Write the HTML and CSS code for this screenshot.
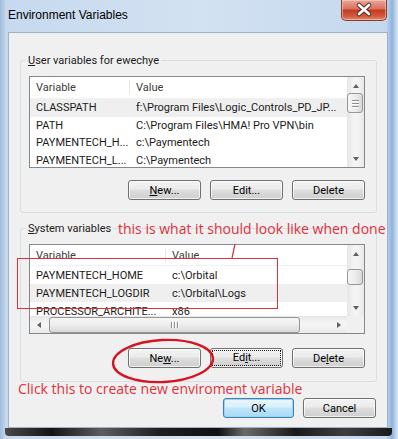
FILE: index.html
```html
<!DOCTYPE html>
<html lang="en">
<head>
    <meta charset="UTF-8">
    <title>Environment Variables</title>
    <link rel="stylesheet" href="styles.css">
</head>
<body>

<div class="window">
    <div class="titlebar">
        <span class="title">Environment Variables</span>
        <div class="close">
            <svg width="44" height="19" viewBox="0 0 44 19">
                <path d="M17 5 L27 14 M27 5 L17 14" stroke="#5a2a22" stroke-width="4.5" stroke-linecap="round"/>
                <path d="M17 5 L27 14 M27 5 L17 14" stroke="#ffffff" stroke-width="2.6" stroke-linecap="round"/>
            </svg>
        </div>
    </div>

    <div class="client">
        <!-- user variables -->
        <fieldset class="group">
            <legend><u>U</u>ser variables for ewechye</legend>
            <div class="listbox user-list">
                <div class="list-body">
                    <div class="list-head"><span class="c1">Variable</span><span class="c2">Value</span></div>
                    <div class="row selected"><span class="c1">CLASSPATH</span><span class="c2">f:\Program Files\Logic_Controls_PD_JP...</span></div>
                    <div class="row"><span class="c1">PATH</span><span class="c2">C:\Program Files\HMA! Pro VPN\bin</span></div>
                    <div class="row"><span class="c1">PAYMENTECH_H...</span><span class="c2">c:\Paymentech</span></div>
                    <div class="row"><span class="c1">PAYMENTECH_L...</span><span class="c2">C:\Paymentech</span></div>
                </div>
                <div class="vscroll">
                    <div class="arrow"><span class="tri up"></span></div>
                    <div class="track"><div class="thumb grip"><i></i><i></i><i></i></div></div>
                    <div class="arrow"><span class="tri down"></span></div>
                </div>
            </div>
            <div class="btn-row">
                <button class="btn"><u>N</u>ew...</button>
                <button class="btn">Edit...</button>
                <button class="btn">Delete</button>
            </div>
        </fieldset>

        <!-- system variables -->
        <fieldset class="group sys-group">
            <legend><u>S</u>ystem variables</legend>
            <div class="listbox sys-list">
                <div class="list-body">
                    <div class="list-head"><span class="c1">Variable</span><span class="c2">Value</span></div>
                    <div class="row"><span class="c1">PAYMENTECH_HOME</span><span class="c2">c:\Orbital</span></div>
                    <div class="row selected"><span class="c1">PAYMENTECH_LOGDIR</span><span class="c2">c:\Orbital\Logs</span></div>
                    <div class="row"><span class="c1">PROCESSOR_ARCHITE...</span><span class="c2">x86</span></div>
                </div>
                <div class="vscroll">
                    <div class="arrow"><span class="tri up"></span></div>
                    <div class="track"><div class="thumb small"></div></div>
                    <div class="arrow"><span class="tri down"></span></div>
                </div>
                <div class="hscroll">
                    <div class="arrow"><span class="tri left"></span></div>
                    <div class="track"><div class="thumb hgrip"><i></i><i></i><i></i></div></div>
                    <div class="arrow"><span class="tri right"></span></div>
                </div>
                <div class="corner"></div>
            </div>
            <div class="btn-row low">
                <button class="btn">Ne<u>w</u>...</button>
                <button class="btn focused"><span>Ed<u>i</u>t...</span></button>
                <button class="btn">De<u>l</u>ete</button>
            </div>
        </fieldset>

        <div class="dialog-btns">
            <button class="btn default ok">OK</button>
            <button class="btn">Cancel</button>
        </div>
    </div>

    <div class="frame-bottom"></div>

    <!-- annotations drawn on top of the screenshot -->
    <span class="note note-top">this is what it should look like when done</span>
    <span class="note note-bottom">Click this to create new enviroment variable</span>
    <svg class="marks" width="398" height="439" viewBox="0 0 398 439">
        <rect x="17.5" y="258.5" width="260" height="50" fill="none" stroke="#d8323e" stroke-width="1"/>
        <path d="M235 244 L232 258" stroke="#d8323e" stroke-width="1.2" fill="none"/>
        <ellipse cx="163" cy="361" rx="50" ry="21" fill="none" stroke="#d4141e" stroke-width="2.4" transform="rotate(-3 163 361)"/>
    </svg>
</div>

</body>
</html>
```

FILE: styles.css
```css
* {
    box-sizing: border-box;
}

body {
    margin: 0;
    font-family: Roboto, "Liberation Sans", Arial, sans-serif;
    font-size: 11px;
    color: #1b1b1b;
}

.window {
    position: relative;
    width: 398px;
    height: 439px;
    padding: 0 10px 0 8px;
    display: flex;
    flex-direction: column;
    overflow: hidden;
    background: linear-gradient(to right, #9fbcdc, #c6d9ee 6px, #d3e2f2 50%, #c4d8ee 97%, #8fb3dc 98.5%, #dbe8f5);
}

.titlebar {
    height: 32px;
    display: flex;
    justify-content: space-between;
    align-items: flex-start;
    flex-shrink: 0;
}

.title {
    font-family: "Liberation Sans", Arial, sans-serif;
    font-size: 12px;
    margin-top: 8px;
    color: #000;
}

.close {
    width: 46px;
    height: 21px;
    margin-right: 1px;
    border: 1px solid #8a3b30;
    border-top: none;
    border-radius: 0 0 5px 5px;
    background: linear-gradient(#e9a89a, #d9705c 45%, #c4381f 50%, #d15a3e 80%, #e4876a);
    box-shadow: inset 0 0 0 1px rgba(255, 220, 210, 0.5);
}

.close svg {
    display: block;
}

.client {
    height: 396px;
    flex-shrink: 0;
    background: #f0f0f0;
    border: 1px solid #9fb1c6;
    padding-top: 20px;
}

.group {
    margin: 0 10px 0 11px;
    border: 1px solid #d5dfe5;
    border-radius: 3px;
    padding: 8px 11px 12px 8px;
    min-width: 0;
}

.group legend {
    line-height: 15px;
    padding: 0 2px;
    margin-left: -3px;
}

.sys-group {
    margin-top: 8px;
    padding-bottom: 13px;
}

.listbox {
    border: 1px solid #828790;
    background: #fff;
    display: grid;
    grid-template-columns: 1fr 17px;
}

.user-list {
    height: 92px;
}

.sys-list {
    height: 90px;
    grid-template-rows: 1fr 17px;
}

.list-body {
    overflow: hidden;
    min-width: 0;
}

.list-head {
    height: 22px;
    display: flex;
    align-items: center;
    color: #3c3c3c;
    border-bottom: 1px solid #f2f2f2;
}

.sys-list .list-head {
    height: 21px;
}

.list-head .c1 {
    border-right: 1px solid #e6e6e6;
}

.row {
    height: 17.5px;
    display: flex;
    align-items: center;
}

.sys-list .row {
    height: 18px;
}

.row.selected {
    background: #efefef;
}

.c1,
.c2 {
    white-space: nowrap;
    overflow: hidden;
    padding-left: 6px;
}

.c1 {
    width: 100px;
    flex-shrink: 0;
}

.sys-list .c1 {
    width: 136px;
}

.vscroll,
.hscroll {
    display: flex;
    background: linear-gradient(to right, #e6e6e6, #f4f4f4 40%, #f4f4f4 60%, #e9e9e9);
}

.vscroll {
    flex-direction: column;
}

.hscroll {
    background: linear-gradient(#e6e6e6, #f4f4f4 40%, #f4f4f4 60%, #e9e9e9);
}

.arrow {
    width: 17px;
    height: 17px;
    flex-shrink: 0;
    display: flex;
    align-items: center;
    justify-content: center;
}

.track {
    flex: 1;
    display: flex;
}

.vscroll .track {
    flex-direction: column;
}

.tri {
    width: 0;
    height: 0;
    border: 3.5px solid transparent;
}

.tri.up {
    border-bottom: 4px solid #606060;
    border-top-width: 0;
}

.tri.down {
    border-top: 4px solid #606060;
    border-bottom-width: 0;
}

.tri.left {
    border-right: 4px solid #606060;
    border-left-width: 0;
}

.tri.right {
    border-left: 4px solid #606060;
    border-right-width: 0;
}

.thumb {
    border: 1px solid #979797;
    border-radius: 3px;
    display: flex;
    align-items: center;
    justify-content: center;
}

.vscroll .thumb {
    width: 16px;
    background: linear-gradient(to right, #f6f6f6, #ececec 50%, #d9d9d9);
    flex-direction: column;
    gap: 2px;
}

.vscroll .thumb.grip {
    height: 20px;
    margin-top: -1px;
}

.vscroll .thumb.small {
    height: 16px;
    margin-top: 7px;
}

.thumb i {
    display: block;
    background: #8d8d8d;
    box-shadow: 0 1px 0 #fff;
}

.grip i {
    width: 7px;
    height: 1px;
}

.hscroll .thumb {
    width: 251px;
    height: 16px;
    margin-left: 2px;
    background: linear-gradient(#f6f6f6, #ececec 50%, #d9d9d9);
    gap: 2px;
}

.hgrip i {
    width: 1px;
    height: 6px;
    box-shadow: 1px 0 0 #fff;
}

.hscroll .track {
    align-items: center;
}

.corner {
    background: #f0f0f0;
}

.btn-row {
    display: flex;
    justify-content: flex-end;
    gap: 9px;
    margin-top: 12px;
}

.btn-row.low {
    margin-top: 14px;
}

.btn {
    width: 73px;
    height: 20px;
    padding: 0;
    font: inherit;
    color: #000;
    border: 1px solid #707070;
    border-radius: 3px;
    background: linear-gradient(#f3f3f3, #ebebeb 45%, #dddddd 50%, #cfcfcf);
    box-shadow: inset 0 0 0 1px rgba(255, 255, 255, 0.7);
}

.btn.focused span {
    display: block;
    margin: 2px;
    line-height: 12px;
    padding: 1px 0;
    outline: 1px dotted #222;
}

.dialog-btns {
    display: flex;
    justify-content: flex-end;
    gap: 9px;
    margin: 16px 11px 0 0;
}

.btn.ok {
    width: 71px;
}

.btn.default {
    border-color: #3c7fb1;
    background: linear-gradient(#eaf6fd, #d9f0fc 45%, #bee6fd 50%, #a7d9f5);
    box-shadow: inset 0 0 0 1px #9ed3f0;
}

.frame-bottom {
    height: 8px;
    margin: 0 -4px 0 -3px;
    border-radius: 0 0 4px 4px;
    background: linear-gradient(to right, #4a4a4a, #141414 12%, #5c5c5c 25%, #1e1e1e 40%, #101010 55%, #6a6a6a 62%, #1a1a1a 75%, #3e3e3e 88%, #1a1a1a);
}

.note {
    position: absolute;
    font-family: "Open Sans", "Noto Sans", sans-serif;
    font-size: 14px;
    line-height: 16px;
    color: #e0303c;
    white-space: nowrap;
}

.note-top {
    left: 118px;
    top: 221px;
}

.note-bottom {
    left: 18px;
    top: 381px;
}

.marks {
    position: absolute;
    left: 0;
    top: 0;
    pointer-events: none;
}
```
